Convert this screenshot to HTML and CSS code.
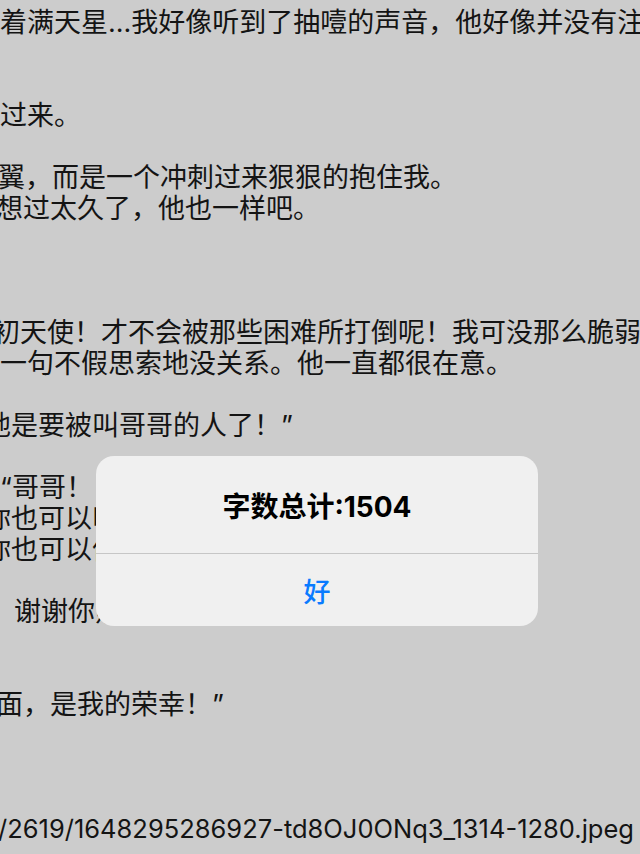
FILE: index.html
```html
<!DOCTYPE html>
<html lang="zh-CN">
  <head>
    <meta charset="utf-8" />
    <meta name="viewport" content="width=device-width, initial-scale=1.0" />
    <title>字数统计</title>
    <link rel="stylesheet" href="styles.css">
  </head>
  <body>
    <div class="reader">
      <p class="line">着满天星...我好像听到了抽噎的声音，他好像并没有注意到</p>
      <p class="line"></p>
      <p class="line"></p>
      <p class="line">过来。</p>
      <p class="line"></p>
      <p class="line cut-xs">翼，而是一个冲刺过来狠狠的抱住我。</p>
      <p class="line cut-s">想过太久了，他也一样吧。</p>
      <p class="line"></p>
      <p class="line"></p>
      <p class="line"></p>
      <p class="line cut-m">初天使！才不会被那些困难所打倒呢！我可没那么脆弱”</p>
      <p class="line">一句不假思索地没关系。他一直都很在意。</p>
      <p class="line"></p>
      <p class="line cut-l">他是要被叫哥哥的人了！”</p>
      <p class="line"></p>
      <p class="line">“哥哥！</p>
      <p class="line cut-l">你也可以叫我哥哥的，我会一直陪着你。</p>
      <p class="line cut-l">你也可以依靠我的，不用一个人扛着。</p>
      <p class="line"></p>
      <p class="line pad">谢谢你照顾我那么久！</p>
      <p class="line"></p>
      <p class="line"></p>
      <p class="line cut-s">面，是我的荣幸！”</p>
      <p class="line"></p>
      <p class="line"></p>
      <p class="line"></p>
      <p class="line url cut-xs">/2619/1648295286927-td8OJ0ONq3_1314-1280.jpeg</p>
    </div>

    <div class="alert" role="alertdialog">
      <div class="alert-title">字数总计:1504</div>
      <button class="alert-btn">好</button>
    </div>
  </body>
</html>
```

FILE: styles.css
```css
html {
  --page-bg: #cccccc;
  --ink: #141414;
  --ios-blue: #0a7bff;
}
body {
  margin: 0;
  background: var(--page-bg);
  font-family: "Inter", "Noto Sans CJK SC", sans-serif;
  color: var(--ink);
  overflow: hidden;
  height: 854px;
}
.reader {
  padding-top: 7px;
}
.line {
  margin: 0;
  height: 31px;
  line-height: 31px;
  font-size: 27px;
  white-space: nowrap;
}
.url {
  font-size: 25.5px;
}
/* lines whose first glyph is cut by the left edge */
.cut-xs {
  text-indent: -2px;
}
.cut-s {
  text-indent: -4px;
}
.cut-m {
  text-indent: -7px;
}
.cut-l {
  text-indent: -16px;
}
.pad {
  padding-left: 14px;
}

.alert {
  position: absolute;
  top: 456px;
  left: 96px;
  width: 442px;
  background: #f0f0f0;
  border-radius: 18px;
  overflow: hidden;
}
.alert-title {
  height: 97px;
  display: flex;
  align-items: center;
  justify-content: center;
  font-size: 28px;
  font-weight: 700;
  color: #000;
  border-bottom: 1px solid #c6c6c6;
}
.alert-btn {
  display: block;
  width: 100%;
  height: 72px;
  padding: 0;
  border: none;
  background: transparent;
  font-family: "Noto Sans CJK SC", sans-serif;
  font-size: 27px;
  font-weight: 500;
  color: var(--ios-blue);
}
```
